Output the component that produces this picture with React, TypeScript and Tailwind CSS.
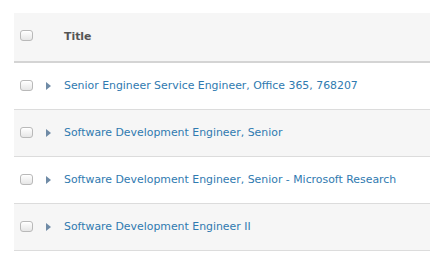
const rows = [
  'Senior Engineer Service Engineer, Office 365, 768207',
  'Software Development Engineer, Senior',
  'Software Development Engineer, Senior - Microsoft Research',
  'Software Development Engineer II',
];

function Checkbox() {
  return (
    <span className="block w-[13px] h-[11px] rounded-[3px] border border-[#b9b9b9] bg-gradient-to-b from-white to-[#e6e6e6] shadow-[inset_0_1px_0_#fff]" />
  );
}

export default function App() {
  return (
    <div className="bg-white w-[430px] h-[257px] pt-[13px] pl-[14px] font-['DejaVu_Sans',Verdana,sans-serif] text-[10.9px]">
      <div className="w-[416px]">
        <div className="flex items-center h-[50px] bg-[#f6f6f6] border-b-2 border-[#d4d4d4]">
          <div className="w-[50px] pl-[6px] mb-[3px]">
            <Checkbox />
          </div>
          <span className="pt-[1px] font-bold text-[#555]">Title</span>
        </div>
        {rows.map((title, i) => (
          <div
            key={title}
            className={`flex items-center h-[47px] border-b border-[#dcdcdc] ${i % 2 === 1 ? 'bg-[#f6f6f6]' : 'bg-white'}`}
          >
            <div className="w-[32px] pl-[6px] mb-[2px]">
              <Checkbox />
            </div>
            <span className="w-[18px]">
              <svg width="5" height="8" viewBox="0 0 5 8" className="block">
                <path d="M0 0 L5 4 L0 8 Z" fill="#6f8ba6" />
              </svg>
            </span>
            <a className="pt-[1px] whitespace-nowrap text-[#2f7ab0]">{title}</a>
          </div>
        ))}
      </div>
    </div>
  );
}
